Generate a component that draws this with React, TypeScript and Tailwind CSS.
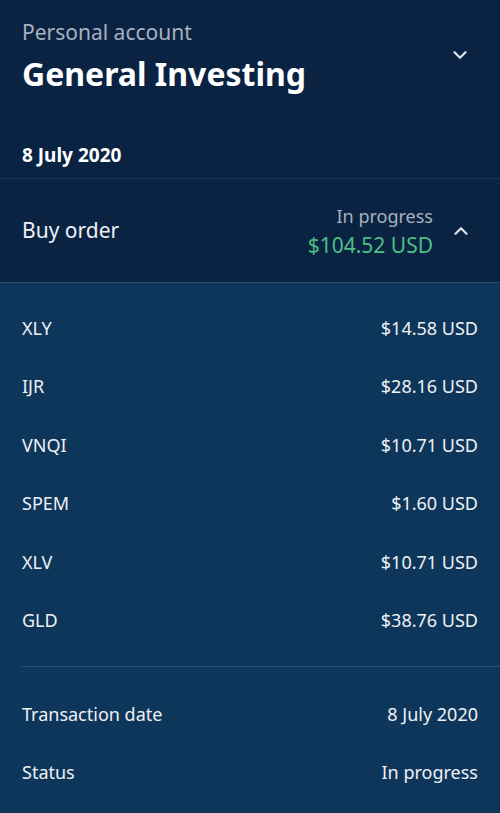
import { ChevronDown, ChevronUp } from "lucide-react";

const holdings = [
  { symbol: "XLY", amount: "$14.58 USD" },
  { symbol: "IJR", amount: "$28.16 USD" },
  { symbol: "VNQI", amount: "$10.71 USD" },
  { symbol: "SPEM", amount: "$1.60 USD" },
  { symbol: "XLV", amount: "$10.71 USD" },
  { symbol: "GLD", amount: "$38.76 USD" },
];

function Row({ label, value }: { label: string; value: string }) {
  return (
    <div className="flex items-center justify-between h-[58.5px] text-[18px] text-[#eef1f4]">
      <span>{label}</span>
      <span>{value}</span>
    </div>
  );
}

export default function App() {
  return (
    <div className="w-[500px] h-[813px] overflow-hidden bg-[#0b2343] font-['Noto_Sans',sans-serif] flex flex-col">
      {/* Account header */}
      <div className="px-[22px] pt-[17px] h-[178px] flex flex-col">
        <div className="flex items-start justify-between">
          <div>
            <div className="text-[21px] leading-[30px] text-[#a7b1bf]">Personal account</div>
            <div className="text-[32px] leading-[46px] font-bold text-white mt-[4px]">General Investing</div>
          </div>
          <ChevronDown className="mt-[27px] mr-[7px] text-[#dde2e8]" size={22} strokeWidth={2.5} />
        </div>
        <div className="mt-[45px] text-[19px] font-bold text-white leading-[26px]">8 July 2020</div>
      </div>
      <div className="h-px bg-[#1b3654]" />

      {/* Order summary */}
      <div className="h-[103px] px-[22px] flex items-center justify-between bg-[#0b2343]">
        <span className="text-[21px] text-[#eef1f4]">Buy order</span>
        <div className="flex items-center">
          <div className="flex flex-col items-end">
            <span className="text-[18px] leading-[28px] text-[#a7b1bf]">In progress</span>
            <span className="text-[21px] leading-[30px] text-[#4cbf85]">$104.52 USD</span>
          </div>
          <ChevronUp className="ml-[17px] mr-[6px] text-[#dde2e8]" size={22} strokeWidth={2.5} />
        </div>
      </div>
      <div className="h-px bg-[#2a5077]" />

      {/* Order details */}
      <div className="flex-1 bg-[#0e365b] pl-[22px] pt-[16px]">
        <div className="pr-[22px]">
          {holdings.map((h) => (
            <Row key={h.symbol} label={h.symbol} value={h.amount} />
          ))}
        </div>
        <div className="mt-[16px] h-px bg-[#24527a]" />
        <div className="pr-[22px] pt-[18px]">
          <Row label="Transaction date" value="8 July 2020" />
          <Row label="Status" value="In progress" />
        </div>
      </div>
    </div>
  );
}
